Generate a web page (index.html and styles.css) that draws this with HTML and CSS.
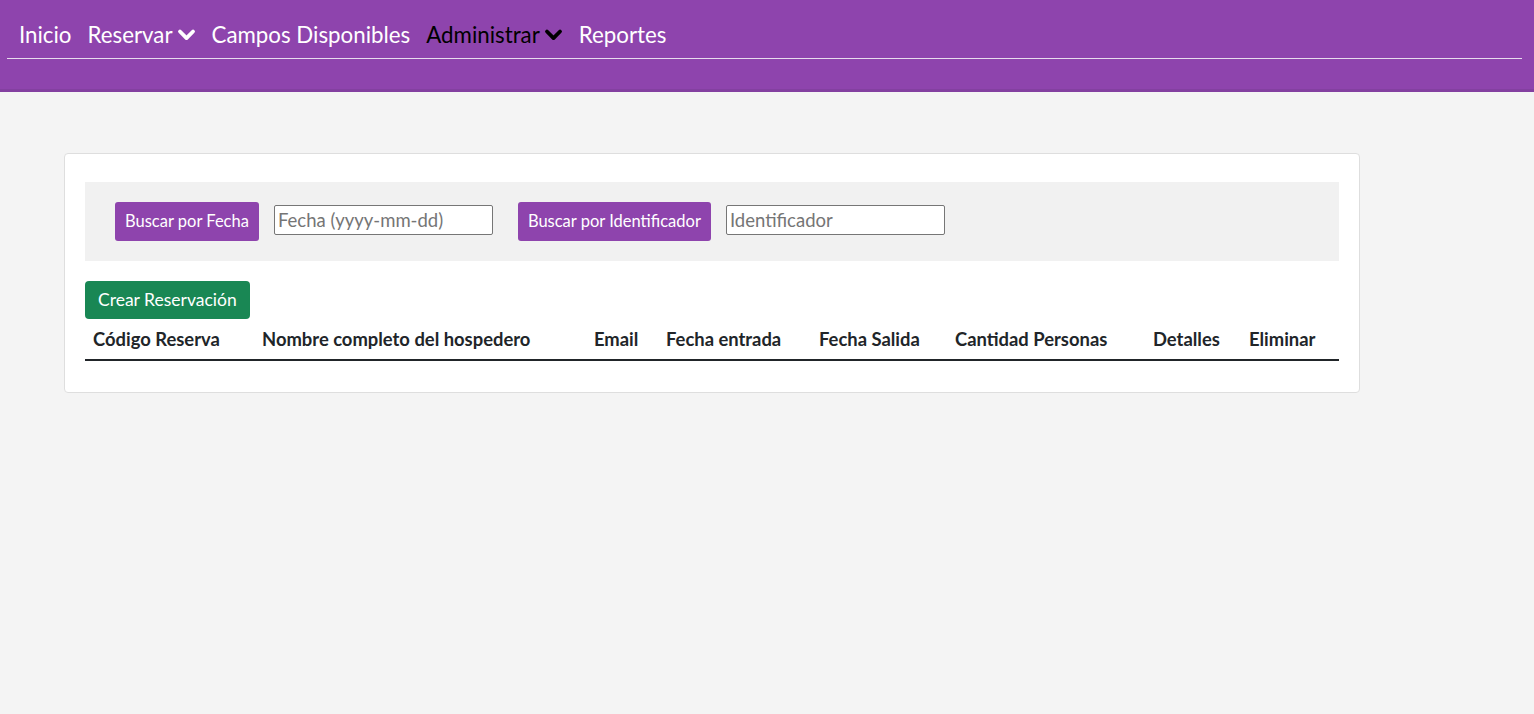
FILE: index.html
```html
<!DOCTYPE html>
<html lang="es">
<head>
<meta charset="utf-8">
<title>Reservas</title>
<link rel="stylesheet" href="styles.css">
</head>
<body>
<header class="navbar">
  <nav class="nav-inner">
    <ul class="menu">
      <li class="menu-item">Inicio</li>
      <li class="menu-item">Reservar <svg class="chev" viewBox="0 0 16 16"><path d="M2.5 5.5 L8 11 L13.5 5.5" /></svg></li>
      <li class="menu-item">Campos Disponibles</li>
      <li class="menu-item active">Administrar <svg class="chev" viewBox="0 0 16 16"><path d="M2.5 5.5 L8 11 L13.5 5.5" /></svg></li>
      <li class="menu-item">Reportes</li>
    </ul>
    <hr class="nav-rule">
  </nav>
</header>
<main class="content">
  <section class="card">
    <div class="filters">
      <button class="btn-purple">Buscar por Fecha</button>
      <input class="field" type="text" placeholder="Fecha (yyyy-mm-dd)">
      <button class="btn-purple gap-left">Buscar por Identificador</button>
      <input class="field" type="text" placeholder="Identificador">
    </div>
    <button class="btn-green">Crear Reservación</button>
    <table class="table">
      <colgroup>
        <col class="c1"><col class="c2"><col class="c3"><col class="c4"><col class="c5"><col class="c6"><col class="c7"><col class="c8">
      </colgroup>
      <thead>
        <tr>
          <th>Código Reserva</th>
          <th>Nombre completo del hospedero</th>
          <th>Email</th>
          <th>Fecha entrada</th>
          <th>Fecha Salida</th>
          <th>Cantidad Personas</th>
          <th>Detalles</th>
          <th>Eliminar</th>
        </tr>
      </thead>
      <tbody></tbody>
    </table>
  </section>
</main>
</body>
</html>
```
FILE: styles.css
```css
* { box-sizing: border-box; }
html, body { margin: 0; padding: 0; }
body {
  background: #f4f4f4;
  font-family: Lato, "Open Sans", sans-serif;
  color: #212529;
}
.navbar {
  background: #8e44ad;
  height: 92px;
  border-bottom: 3px solid #8340a0;
  padding: 0 12px 0 7px;
}
.nav-inner { padding-top: 19px; }
.menu {
  list-style: none;
  margin: 0;
  padding: 0 0 0 12px;
  display: flex;
  gap: 16px;
  height: 30px;
  align-items: center;
}
.menu-item {
  color: #fff;
  font-size: 22.3px;
  display: flex;
  align-items: center;
  gap: 4px;
}
.menu-item.active { color: #000; }
.chev { width: 19px; height: 19px; }
.chev path { fill: none; stroke: currentColor; stroke-width: 3.2; stroke-linecap: round; stroke-linejoin: round; }
.nav-rule {
  margin: 9px 0 0 0;
  border: 0;
  border-top: 1px solid #e8dcee;
  height: 0;
}
.content { padding: 61px 0 0 64px; }
.card {
  width: 1296px;
  background: #fff;
  border: 1px solid #dedede;
  border-radius: 4px;
  padding: 28px 20px 31px 20px;
}
.filters {
  background: #f1f1f1;
  height: 79px;
  display: flex;
  align-items: center;
  padding-left: 30px;
}
.btn-purple {
  background: #8e44ad;
  color: #fff;
  border: 0;
  border-radius: 3px;
  height: 39px;
  padding: 0 10px 2px 10px;
  font-family: inherit;
  font-size: 16.5px;
}
.field {
  margin-left: 15px;
  margin-bottom: 3px;
  width: 219px;
  height: 30px;
  border: 1px solid #767676;
  border-radius: 2px;
  padding: 0 3px;
  font-family: inherit;
  font-size: 18.5px;
}
.field::placeholder { color: #757575; }
.gap-left { margin-left: 25px; }
.btn-green {
  display: block;
  margin-top: 20px;
  background: #198754;
  color: #fff;
  border: 0;
  border-radius: 4px;
  height: 38px;
  padding: 0 13px 1px 13px;
  font-family: inherit;
  font-size: 17.5px;
}
.table {
  width: 100%;
  border-collapse: collapse;
  table-layout: fixed;
}
.table th {
  text-align: left;
  font-weight: bold;
  font-size: 18.4px;
  padding: 9px 8px 9px 8px;
  border-bottom: 2px solid #212529;
  height: 40px;
  white-space: nowrap;
}
.c1 { width: 169px; }
.c2 { width: 332px; }
.c3 { width: 72px; }
.c4 { width: 153px; }
.c5 { width: 136px; }
.c6 { width: 198px; }
.c7 { width: 96px; }
.c8 { width: 98px; }
```
